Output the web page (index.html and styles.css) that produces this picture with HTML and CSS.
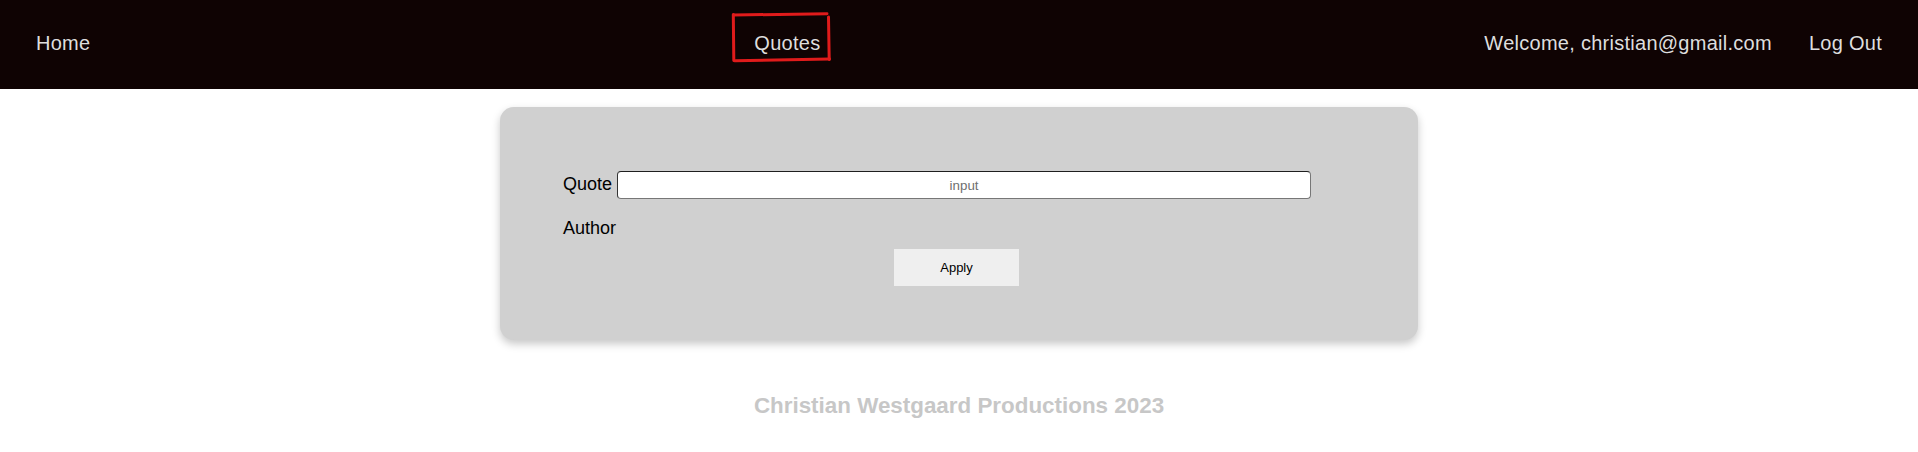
FILE: index.html
```html
<!DOCTYPE html>
<html lang="en">
<head>
<meta charset="utf-8">
<title>Quotes</title>
<link rel="stylesheet" href="styles.css">
</head>
<body>
<header class="nav">
  <a class="nav-link" href="#">Home</a>
  <a class="nav-link nav-link--marked" href="#">Quotes<svg class="annot" width="102" height="54" viewBox="0 0 102 54" aria-hidden="true"><path d="M2.5 3 L96 1.8" /><path d="M97.5 5 L98.2 47.5" /><path d="M98.5 47 L3.5 48.8" /><path d="M2.8 48.5 L2.3 2.6" /></svg></a>
  <div class="nav-right">
    <span class="nav-link">Welcome, christian@gmail.com</span>
    <a class="nav-link" href="#">Log Out</a>
  </div>
</header>
<main class="main">
  <section class="card">
    <form class="form">
      <div class="row">
        <label class="label" for="quote">Quote</label>
        <input class="input" id="quote" type="text" placeholder="input">
      </div>
      <div class="row row--author">
        <label class="label">Author</label>
      </div>
      <button class="btn" type="button">Apply</button>
    </form>
  </section>
  <footer class="footer">Christian Westgaard Productions 2023</footer>
</main>
</body>
</html>
```

FILE: styles.css
```css
html, body {
  margin: 0;
  padding: 0;
  background: #ffffff;
  font-family: "Liberation Sans", Arial, sans-serif;
}

.nav {
  box-sizing: border-box;
  height: 89px;
  padding: 0 36px 3px 36px;
  background: #0f0303;
  display: flex;
  align-items: center;
  justify-content: space-between;
}

.nav-link {
  color: #dedede;
  font-size: 20px;
  letter-spacing: 0.27px;
  text-decoration: none;
  line-height: 23px;
}

.nav-link--marked {
  position: relative;
}

.annot {
  position: absolute;
  left: -23px;
  top: -20px;
  overflow: visible;
}

.annot path {
  fill: none;
  stroke: #e01b1b;
  stroke-width: 3;
  stroke-linecap: round;
}

.nav-right {
  display: flex;
  align-items: center;
  gap: 37px;
}

.main {
  display: flex;
  flex-direction: column;
  align-items: center;
}

.card {
  box-sizing: border-box;
  width: 918px;
  margin-top: 18px;
  padding: 64px 68px 54px 63px;
  background: #d0d0d0;
  border-radius: 14px;
  box-shadow: 0 4px 8px rgba(0, 0, 0, 0.22);
}

.form {
  display: flex;
  flex-direction: column;
}

.row {
  display: flex;
  align-items: baseline;
  gap: 5px;
}

.row--author {
  margin-top: 19px;
}

.label {
  font-size: 18px;
  line-height: 21px;
  color: #000000;
}

.input {
  box-sizing: border-box;
  width: 694px;
  height: 28px;
  margin: 0;
  padding: 0 4px;
  border: 1px solid #777777;
  border-top-color: #1e1e1e;
  border-left-color: #333333;
  border-radius: 4px;
  background: #ffffff;
  font-family: "Liberation Sans", Arial, sans-serif;
  font-size: 13.33px;
  text-align: center;
}

.input::placeholder {
  color: #6f6f6f;
}

.btn {
  display: block;
  align-self: center;
  width: 125px;
  height: 37px;
  margin-top: 10px;
  border: none;
  background: #efefef;
  color: #000000;
  font-family: "Liberation Sans", Arial, sans-serif;
  font-size: 13px;
}

.footer {
  margin-top: 52px;
  color: #c7c7c7;
  font-size: 22.4px;
  font-weight: bold;
  line-height: 28px;
}
```
